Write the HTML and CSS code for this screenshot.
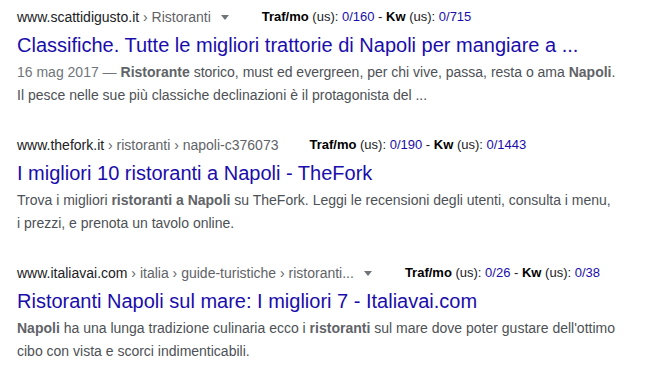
FILE: index.html
```html
<!DOCTYPE html>
<html lang="it">
<head>
<meta charset="utf-8">
<title>Ristoranti Napoli</title>
<link rel="stylesheet" href="styles.css">
</head>
<body>
<div class="results">
  <div class="result">
    <div class="crumb">
      <span class="host">www.scattidigusto.it</span><span class="path"> › Ristoranti</span>
      <span class="arrow"></span>
      <span class="traf"><b>Traf/mo</b> (us): <span class="num">0/160</span> - <b>Kw</b> (us): <span class="num">0/715</span></span>
    </div>
    <h3 class="title">Classifiche. Tutte le migliori trattorie di Napoli per mangiare a ...</h3>
    <div class="snippet"><span class="date">16 mag 2017 — </span><em>Ristorante</em> storico, must ed evergreen, per chi vive, passa, resta o ama <em>Napoli</em>.<br>Il pesce nelle sue più classiche declinazioni è il protagonista del ...</div>
  </div>
  <div class="result">
    <div class="crumb">
      <span class="host">www.thefork.it</span><span class="path"> › ristoranti › napoli-c376073</span>
      <span class="traf"><b>Traf/mo</b> (us): <span class="num">0/190</span> - <b>Kw</b> (us): <span class="num">0/1443</span></span>
    </div>
    <h3 class="title">I migliori 10 ristoranti a Napoli - TheFork</h3>
    <div class="snippet">Trova i migliori <em>ristoranti a Napoli</em> su TheFork. Leggi le recensioni degli utenti, consulta i menu,<br>i prezzi, e prenota un tavolo online.</div>
  </div>
  <div class="result">
    <div class="crumb">
      <span class="host">www.italiavai.com</span><span class="path"> › italia › guide-turistiche › ristoranti...</span>
      <span class="arrow"></span>
      <span class="traf"><b>Traf/mo</b> (us): <span class="num">0/26</span> - <b>Kw</b> (us): <span class="num">0/38</span></span>
    </div>
    <h3 class="title">Ristoranti Napoli sul mare: I migliori 7 - Italiavai.com</h3>
    <div class="snippet"><em>Napoli</em> ha una lunga tradizione culinaria ecco i <em>ristoranti</em> sul mare dove poter gustare dell'ottimo<br>cibo con vista e scorci indimenticabili.</div>
  </div>
</div>
</body>
</html>
```
FILE: styles.css
```css
html, body {
  margin: 0;
  padding: 0;
  background: #ffffff;
}

body {
  font-family: Arial, "Liberation Sans", sans-serif;
  color: #4d5156;
}

.results {
  padding: 8px 0 0 17px;
}

.result {
  margin-bottom: 30px;
}

.crumb {
  display: flex;
  align-items: center;
  font-size: 14px;
  line-height: 18px;
  height: 18px;
  white-space: nowrap;
}

.host {
  color: #202124;
}

.path {
  color: #5f6368;
  white-space: pre;
}

.arrow {
  width: 0;
  height: 0;
  margin-left: 10px;
  margin-right: 2px;
  border-left: 4px solid transparent;
  border-right: 4px solid transparent;
  border-top: 5px solid #70757a;
}

.traf {
  margin-left: 31px;
  font-size: 13px;
  color: #202124;
}

.traf b {
  font-weight: bold;
  color: #000000;
}

.num {
  color: #1a0dab;
}

.title {
  margin: 0;
  padding-top: 6px;
  margin-bottom: 3px;
  font-size: 20px;
  line-height: 26px;
  font-weight: normal;
  color: #1a0dab;
  white-space: nowrap;
}

.snippet {
  font-size: 14px;
  line-height: 22.5px;
  color: #4d5156;
}

.snippet em {
  font-style: normal;
  font-weight: bold;
  color: #5f6368;
}

.date {
  color: #70757a;
}
```
